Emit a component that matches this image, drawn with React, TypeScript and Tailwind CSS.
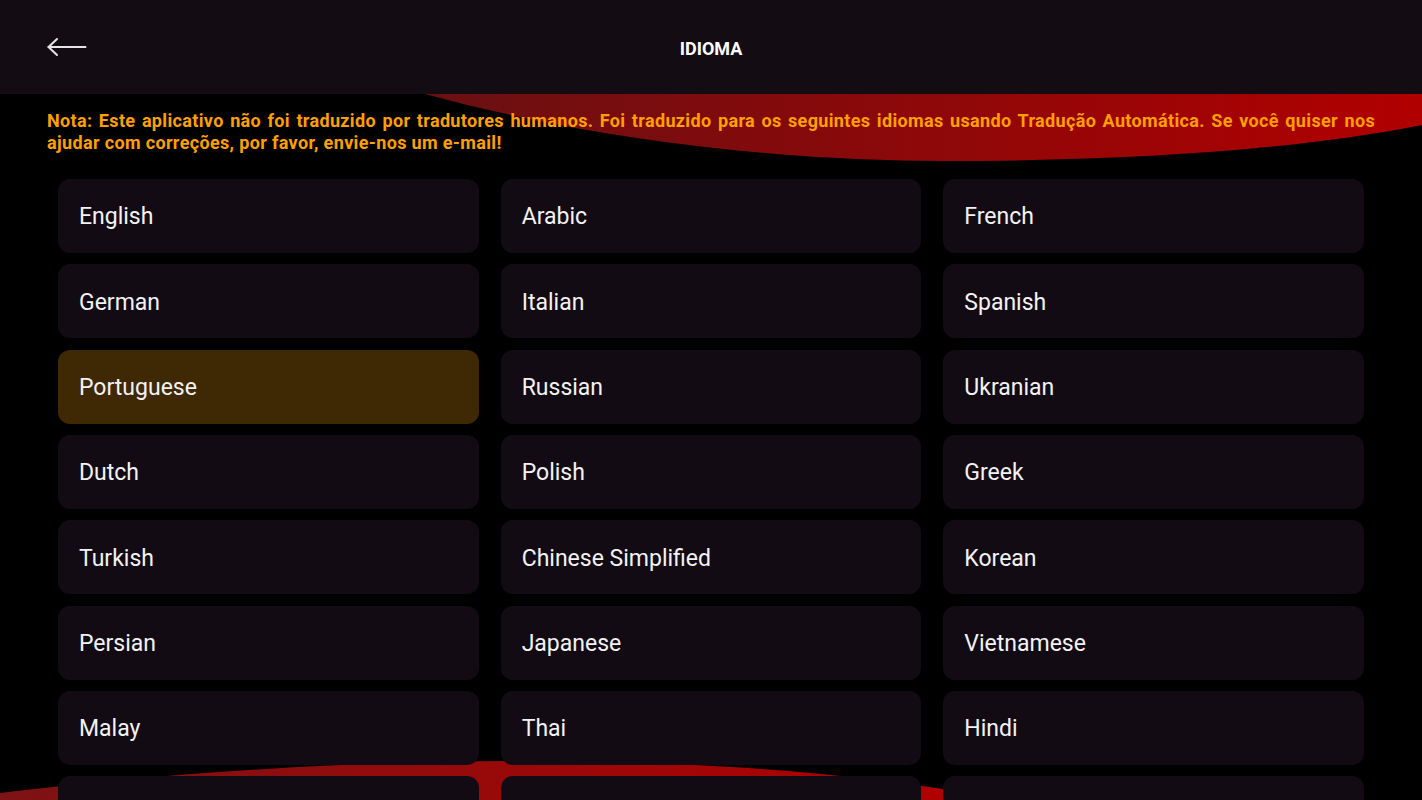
const LANGUAGES = [
  "English", "Arabic", "French",
  "German", "Italian", "Spanish",
  "Portuguese", "Russian", "Ukranian",
  "Dutch", "Polish", "Greek",
  "Turkish", "Chinese Simplified", "Korean",
  "Persian", "Japanese", "Vietnamese",
  "Malay", "Thai", "Hindi",
];

// the next row is only peeking in at the bottom edge
const PARTIAL_ROW = ["row-a", "row-b", "row-c"];

const SELECTED = "Portuguese";

function BackArrow() {
  return (
    <svg width="40" height="20" viewBox="0 0 40 20" fill="none" className="block">
      <path d="M1.5 10 H38.5" stroke="#e6e6e6" strokeWidth="2" strokeLinecap="round" />
      <path d="M10 2 L1.5 10 L10 18" stroke="#e6e6e6" strokeWidth="2" strokeLinecap="round" strokeLinejoin="round" />
    </svg>
  );
}

export default function App() {
  return (
    <div className="relative w-[1422px] h-[800px] overflow-hidden bg-black font-['Roboto',sans-serif]">
      {/* red swoosh decorations */}
      <svg className="absolute left-0 top-[94px] pointer-events-none" width="1422" height="80" viewBox="0 0 1422 80">
        <defs>
          <linearGradient id="topRed" x1="0" x2="1" y1="0" y2="0">
            <stop offset="0" stopColor="#6a1012" />
            <stop offset="1" stopColor="#b10000" />
          </linearGradient>
        </defs>
        <path d="M425 0 C 600 48 790 67 945 67 C 1140 67 1300 55 1422 31 L1422 0 Z" fill="url(#topRed)" />
      </svg>
      <svg className="absolute left-0 top-[740px] pointer-events-none" width="1422" height="60" viewBox="0 0 1422 60">
        <defs>
          <linearGradient id="botRed" x1="0" x2="1" y1="0" y2="0">
            <stop offset="0" stopColor="#7e1214" />
            <stop offset="1" stopColor="#b30000" />
          </linearGradient>
        </defs>
        <path d="M0 60 L0 53 C 150 35 330 21 520 21 C 710 21 860 33 1010 60 Z" fill="url(#botRed)" />
      </svg>

      <div className="relative flex flex-col">
        <header className="h-[94px] bg-[#130c13] flex items-center relative">
          <div className="absolute left-[47px] top-[37px]">
            <BackArrow />
          </div>
          <div className="flex-1 text-center text-white font-bold text-[18px] pt-[2px]">IDIOMA</div>
        </header>

        <div className="px-[47px] pt-[16px] text-[#ffa000] font-bold text-[18px] leading-[22px] tracking-[0.35px]">
          <div className="text-justify [text-align-last:justify]">
            Nota: Este aplicativo não foi traduzido por tradutores humanos. Foi traduzido para os seguintes idiomas usando Tradução Automática. Se você quiser nos
          </div>
          <div>ajudar com correções, por favor, envie-nos um e-mail!</div>
        </div>

        <div className="mt-[25px] px-[58px] grid grid-cols-3 gap-x-[22px] gap-y-[11.33px]">
          {LANGUAGES.map((lang) => (
            <div
              key={lang}
              className={`h-[74px] rounded-[12px] flex items-center pl-[21px] pt-[3px] text-[23px] text-[#f2f2f2] ${
                lang === SELECTED ? "bg-[#3f2804]" : "bg-[#130b13]"
              }`}
            >
              {lang}
            </div>
          ))}
          {PARTIAL_ROW.map((k) => (
            <div key={k} className="h-[74px] rounded-[12px] bg-[#130b13]" />
          ))}
        </div>
      </div>
    </div>
  );
}
